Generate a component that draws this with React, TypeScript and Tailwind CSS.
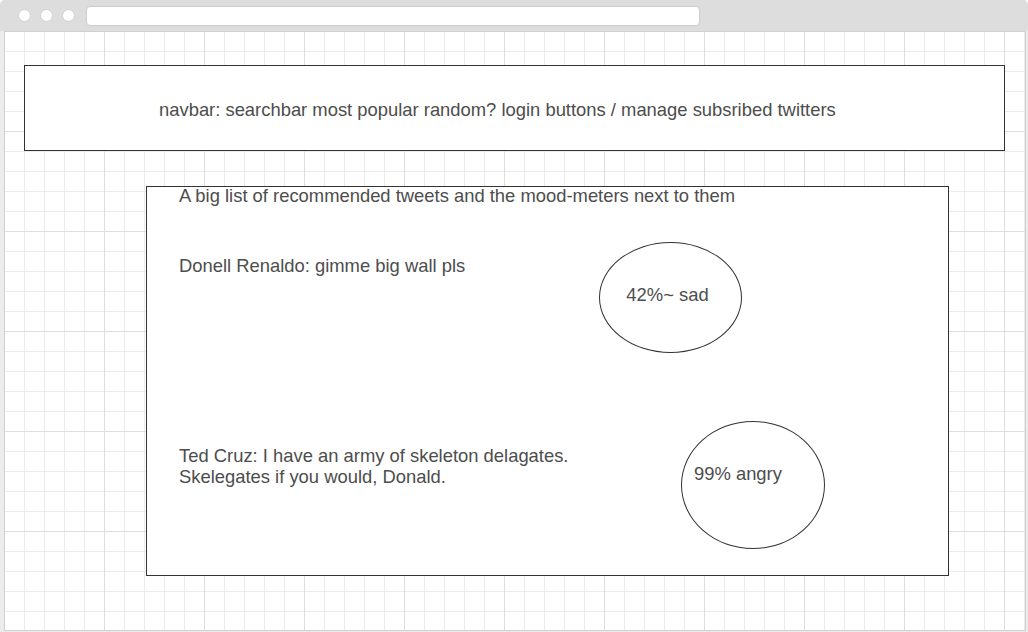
import React from 'react';

const tweets = [
  { id: 1, lines: ['Donell Renaldo: gimme big wall pls'], mood: '42%~ sad' },
  { id: 2, lines: ['Ted Cruz: I have an army of skeleton delagates.', 'Skelegates if you would, Donald.'], mood: '99% angry' },
];

const BrowserBar = () => (
  <div className="h-[31px] shrink-0 bg-[#dddddd] rounded-t-[5px] flex items-center pl-[18px]">
    <div className="flex gap-[9px]">
      <span className="w-[13px] h-[13px] rounded-full bg-white border border-[#d0d0d0]" />
      <span className="w-[13px] h-[13px] rounded-full bg-white border border-[#d0d0d0]" />
      <span className="w-[13px] h-[13px] rounded-full bg-white border border-[#d0d0d0]" />
    </div>
    <div className="ml-[11px] w-[614px] h-[20px] bg-white rounded-[4px] border border-[#cccccc]" />
  </div>
);

export default function App() {
  return (
    <div className="w-[1028px] h-[632px] bg-[#ececec] rounded-t-[5px] flex flex-col font-['Liberation_Sans',Arial,sans-serif] text-[18.4px] text-[#4d4d4d]">
      <BrowserBar />
      <div className="flex-1 ml-[4px] mr-[2px] mb-[1px] border border-[#d0d0d0] bg-white bg-[linear-gradient(to_right,transparent_99px,#dedede_99px),linear-gradient(to_bottom,transparent_99px,#dedede_99px),linear-gradient(to_right,transparent_19px,#ebebeb_19px),linear-gradient(to_bottom,transparent_19px,#ebebeb_19px)] bg-size-[100px_100px,100px_100px,20px_20px,20px_20px]">
        {/* navbar placeholder */}
        <div className="mt-[33px] ml-[19px] w-[981px] h-[86px] bg-white border border-[#333333] flex items-center pt-[4px] pl-[134px] leading-[20px]">
          navbar: searchbar most popular random? login buttons / manage subsribed twitters
        </div>

        {/* recommended tweets */}
        <div className="mt-[35px] ml-[141px] w-[803px] h-[390px] bg-white border border-[#333333] pl-[32px]">
          <p className="leading-[17px]">A big list of recommended tweets and the mood-meters next to them</p>

          <div className="mt-[38px] flex items-start">
            <p className="w-[420px] mt-[14px] leading-[20px]">{tweets[0].lines[0]}</p>
            <div className="w-[143px] h-[111px] rounded-[50%] border border-[#333333] flex items-center justify-center pb-[6px] pr-[6px] leading-[20px]">
              {tweets[0].mood}
            </div>
          </div>

          <div className="mt-[68px] flex items-start">
            <div className="w-[502px] mt-[24px] leading-[21px]">
              {tweets[1].lines.map(l => <p key={l}>{l}</p>)}
            </div>
            <div className="w-[144px] h-[128px] rounded-[50%] border border-[#333333] pt-[42px] pl-[12px] leading-[20px]">
              {tweets[1].mood}
            </div>
          </div>
        </div>
      </div>
    </div>
  );
}
